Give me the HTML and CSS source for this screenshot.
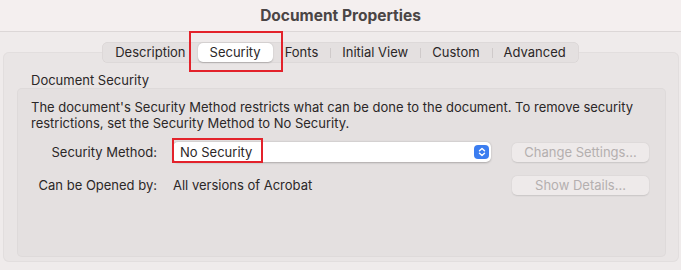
FILE: index.html
```html
<!DOCTYPE html>
<html lang="en">
<head>
  <meta charset="UTF-8" />
  <title>Document Properties</title>
  <link rel="stylesheet" href="styles.css">
</head>
<body>
  <header class="titlebar">Document Properties</header>

  <div class="window">
    <!-- Tabs -->
    <nav class="tabs">
      <span class="tab">Description</span>
      <span class="tab active">Security</span>
      <span class="tab">Fonts</span>
      <span class="tab sep">Initial View</span>
      <span class="tab sep">Custom</span>
      <span class="tab sep">Advanced</span>
    </nav>

    <section class="panel">
      <h2 class="group-title">Document Security</h2>
      <div class="group">
        <p class="note">The document's Security Method restricts what can be done to the document. To remove security restrictions, set the Security Method to No Security.</p>

        <div class="form">
          <label class="label">Security Method:</label>
          <div class="popup">
            <span class="popup-text">No Security</span>
            <span class="mark"></span>
            <span class="stepper">
              <svg width="8" height="10" viewBox="0 0 8 10">
                <path d="M1.5 3.8 L4 1.5 L6.5 3.8 M1.5 6.2 L4 8.5 L6.5 6.2" fill="none" stroke="#fff" stroke-width="1.4" stroke-linecap="round" stroke-linejoin="round"/>
              </svg>
            </span>
          </div>
          <button class="btn" disabled>Change Settings...</button>

          <label class="label">Can be Opened by:</label>
          <span class="value">All versions of Acrobat</span>
          <button class="btn" disabled>Show Details...</button>
        </div>
      </div>
    </section>
  </div>
</body>
</html>
```

FILE: styles.css
```css
body {
  margin: 0;
  height: 270px;
  overflow: hidden;
  font-family: Inter, 'Liberation Sans', Arial, sans-serif;
  font-size: 13px;
  color: #2b2727;
  background: #efebeb;
}

.titlebar {
  height: 31px;
  line-height: 31px;
  text-align: center;
  font-size: 15.5px;
  font-weight: bold;
  color: #4a4545;
  background: #f4efef;
  border-bottom: 1px solid #dcd7d7;
}

.window {
  padding-top: 10px;
}

/* tabs */
.tabs {
  display: flex;
  width: max-content;
  margin: 0 auto -11px;
  padding: 1px;
  position: relative;
  z-index: 1;
  background: #e4e0e0;
  border-radius: 6px;
  box-shadow: inset 0 0 0 0.5px #d6d1d1;
}

.tab {
  position: relative;
  height: 19px;
  line-height: 19px;
  padding: 0 12px;
  color: #2b2727;
}

.tab.sep::before {
  content: "";
  position: absolute;
  left: 0;
  top: 5px;
  height: 10px;
  border-left: 1px solid #cfcaca;
}

.tab.active {
  background: #fff;
  border-radius: 5px;
  box-shadow: 0 0.5px 1.5px rgba(0, 0, 0, 0.22);
}

.tab.active::after {
  content: "";
  position: absolute;
  left: -9px;
  right: -10px;
  top: -12px;
  bottom: -10px;
  border: 2px solid #e3222b;
}

/* panel */
.panel {
  margin: 0 2px 0 3px;
  padding: 20px 13px 5px 14px;
  height: 210px;
  box-sizing: border-box;
  background: #e9e5e5;
  border-radius: 6px;
  box-shadow: inset 0 0 0 1px #e2dede;
}

.group-title {
  margin: 0 0 0 14px;
  font-size: 13px;
  font-weight: normal;
  line-height: 16px;
}

.group {
  margin-top: 0;
  padding: 11px 14px 0;
  height: 169px;
  box-sizing: border-box;
  background: #e4e0e0;
  border-radius: 5px;
  box-shadow: inset 0 0 0 1px #dedada;
}

.note {
  margin: 0;
  line-height: 16px;
}

.form {
  display: grid;
  grid-template-columns: 126px 318px 137px;
  grid-template-rows: 20px 18px;
  column-gap: 16px;
  row-gap: 14px;
  margin-top: 11px;
  align-items: center;
}

.label {
  text-align: right;
}

.popup {
  position: relative;
  height: 20px;
  line-height: 20px;
  padding-left: 7px;
  background: #fff;
  border-radius: 5px;
  box-shadow: 0 0.5px 2px rgba(0, 0, 0, 0.25);
}

.mark {
  position: absolute;
  left: -1px;
  top: -4px;
  width: 91px;
  height: 25px;
  box-sizing: border-box;
  border: 2px solid #e3222b;
}

.stepper {
  position: absolute;
  right: 2px;
  top: 3px;
  width: 15px;
  height: 14px;
  display: flex;
  align-items: center;
  justify-content: center;
  background: #3b7df0;
  border-radius: 4px;
}

.btn {
  margin-left: 5px;
  width: 137px;
  height: 19px;
  padding: 0;
  font-family: inherit;
  font-size: 13px;
  color: #b4afaf;
  background: #eeeaea;
  border: none;
  border-radius: 5px;
  box-shadow: 0 0.5px 1.5px rgba(0, 0, 0, 0.12);
}
```
